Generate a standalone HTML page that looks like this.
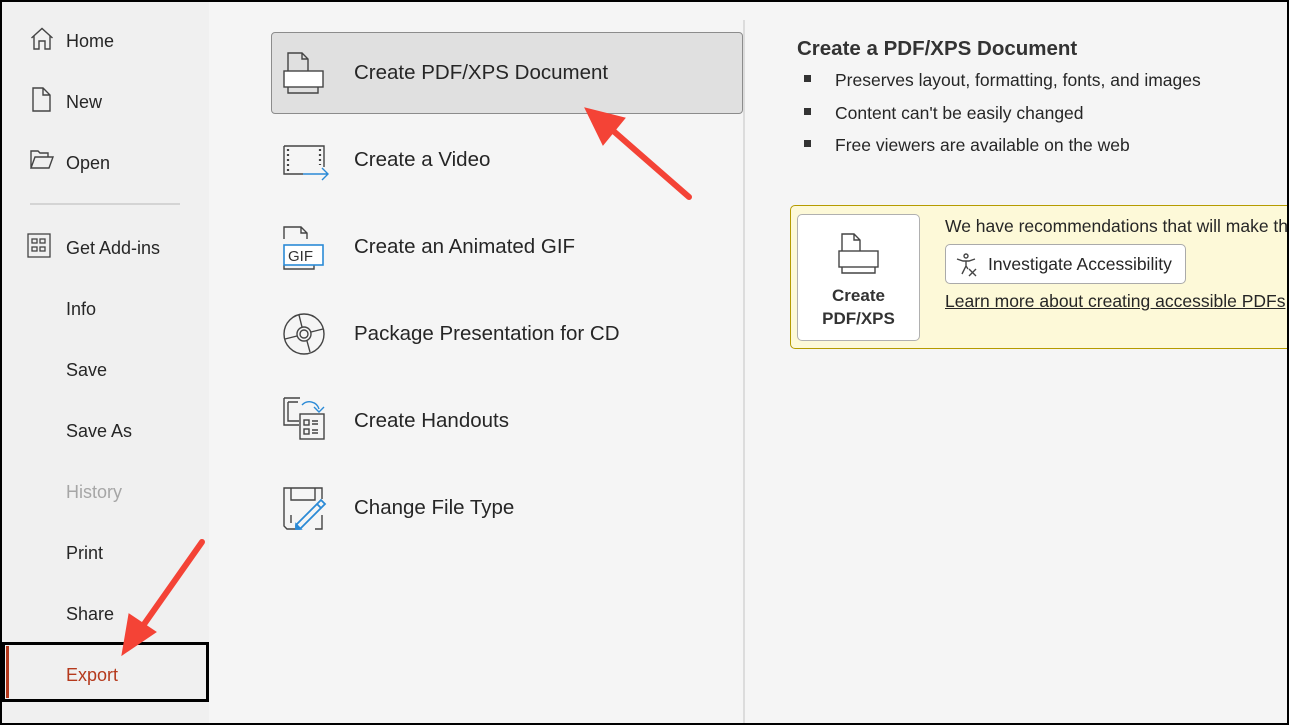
<!DOCTYPE html>
<html><head><meta charset="utf-8"><style>
*{margin:0;padding:0;box-sizing:border-box}
body{width:1289px;height:725px;overflow:hidden;background:#000;font-family:"Liberation Sans","DejaVu Sans",sans-serif;color:#262626;position:relative}
#frame{position:absolute;left:0;top:0;width:1287px;height:723px;overflow:hidden}
#side{position:absolute;left:2px;top:2px;width:207px;height:721px;background:#f0f0f0}
#main{position:absolute;left:209px;top:2px;width:1078px;height:721px;background:#f5f5f5}
.t{position:absolute;white-space:nowrap;line-height:1}
.si{font-size:18px;left:66px}
.mi{font-size:20.5px;left:354px}
svg{position:absolute;overflow:visible}
</style></head><body>
<div id="frame">
<div id="side"></div>
<div id="main"></div>
<!-- sidebar -->
<svg style="left:30px;top:27px" width="26" height="26" viewBox="0 0 26 26" fill="none" stroke="#444" stroke-width="1.4"><path d="M1.5 11 L12 1.5 L22.5 11 M4 9 V22 H9 V14 H15 V22 H20 V9"/></svg>
<div class="t si" style="top:32px">Home</div>
<svg style="left:32px;top:87px" width="20" height="26" viewBox="0 0 20 26" fill="none" stroke="#444" stroke-width="1.4"><path d="M1 1 H11 L18 8 V24 H1 Z M11 1 V8 H18"/></svg>
<div class="t si" style="top:93px">New</div>
<svg style="left:30px;top:150px" width="24" height="20" viewBox="0 0 24 20" fill="none" stroke="#444" stroke-width="1.4"><path d="M1 18 V1 H8 L10 3 H18 V7 M1 18 L5 7 H23 L19 18 Z"/></svg>
<div class="t si" style="top:154px">Open</div>
<div style="position:absolute;left:30px;top:203px;width:150px;height:2px;background:#d4d4d4"></div>
<svg style="left:27px;top:233px" width="24" height="24" viewBox="0 0 24 24" fill="none" stroke="#444" stroke-width="1.3"><rect x="1" y="1" width="22" height="23"/><rect x="5" y="6" width="5" height="4"/><rect x="13" y="6" width="5" height="4"/><rect x="5" y="14" width="5" height="4"/><rect x="13" y="14" width="5" height="4"/></svg>
<div class="t si" style="top:239px">Get Add-ins</div>
<div class="t si" style="top:300px">Info</div>
<div class="t si" style="top:361px">Save</div>
<div class="t si" style="top:422px">Save As</div>
<div class="t si" style="top:483px;color:#a6a6a6">History</div>
<div class="t si" style="top:544px">Print</div>
<div class="t si" style="top:605px">Share</div>
<div style="position:absolute;left:2px;top:642px;width:207px;height:60px;border:3px solid #000"></div>
<div style="position:absolute;left:6px;top:646px;width:3px;height:52px;background:#b5391c"></div>
<div class="t si" style="top:666px;color:#b5391c">Export</div>
<!-- middle -->
<div style="position:absolute;left:743px;top:20px;width:2px;height:705px;background:#dcdcdc"></div>
<div style="position:absolute;left:271px;top:32px;width:472px;height:82px;background:#e0e0e0;border:1px solid #8c8c8c;border-radius:4px"></div>
<svg style="left:283px;top:52px" width="42" height="42" viewBox="0 0 42 42" fill="none" stroke="#444" stroke-width="1.4"><path d="M5 19 V1 H19 L25 7 V19 M19 1 V7 H25"/><rect x="1" y="19" width="39" height="16" fill="#fff"/><path d="M5 35 V41 H35 V35"/></svg>
<div class="t mi" style="top:63px">Create PDF/XPS Document</div>
<svg style="left:283px;top:145px" width="46" height="40" viewBox="0 0 46 40" fill="none" stroke="#444" stroke-width="1.4"><path d="M1 1 H41 V22 M20 29 H1 V1"/><path d="M5 4 V27 M37 4 V20" stroke-dasharray="2 3" stroke-width="2.2"/><path d="M20 29 H45 M39 23 L45 29 L39 35" stroke="#2b8ad6"/></svg>
<div class="t mi" style="top:150px">Create a Video</div>
<svg style="left:283px;top:226px" width="42" height="44" viewBox="0 0 42 44" fill="none" stroke="#444" stroke-width="1.4"><path d="M1 13 V1 H18 L24 7 V13 M18 1 V7 H24 M1 39 V43 H31 V39"/><rect x="1" y="19" width="39" height="20" fill="#fff" stroke="#2b8ad6" stroke-width="1.6"/><text x="5" y="35" font-size="15" font-family="Liberation Sans" fill="#333" stroke="none">GIF</text></svg>
<div class="t mi" style="top:237px">Create an Animated GIF</div>
<svg style="left:283px;top:313px" width="42" height="42" viewBox="0 0 42 42" fill="none" stroke="#444" stroke-width="1.4"><circle cx="21" cy="21" r="20"/><circle cx="21" cy="21" r="7"/><circle cx="21" cy="21" r="4"/><path d="M16 2 L19 14 M2 26 L14 23 M27 39 L24 28 M40 16 L28 19"/></svg>
<div class="t mi" style="top:324px">Package Presentation for CD</div>
<svg style="left:283px;top:397px" width="46" height="46" viewBox="0 0 46 46" fill="none" stroke="#444" stroke-width="1.4"><path d="M1 1 H17 M1 1 V28 H16 M5 5 H15 M5 5 V24 H16"/><rect x="17" y="17" width="24" height="25" fill="#f5f5f5"/><rect x="21" y="23" width="5" height="5"/><rect x="21" y="32" width="5" height="5"/><path d="M29 24 H35 M29 27 H35 M29 33 H35 M29 36 H35"/><path d="M19 8 A10 10 0 0 1 36 12 M31 10 L36 15 L41 10" stroke="#2b8ad6"/></svg>
<div class="t mi" style="top:411px">Create Handouts</div>
<svg style="left:283px;top:487px" width="46" height="44" viewBox="0 0 46 44" fill="none" stroke="#444" stroke-width="1.4"><path d="M13 42 H4 L1 39 V1 H39 V12 M8 1 V13 H32 V1 M8 28 V36 M39 28 V42 H32"/><path d="M42 17 L17 42 L13 42 L13 38 L38 13 Z M34 17 L38 21" stroke="#2b8ad6" stroke-width="1.8"/><path d="M13 42 L13 37 L18 42 Z" fill="#2b8ad6" stroke="#2b8ad6"/></svg>
<div class="t mi" style="top:498px">Change File Type</div>
<!-- right -->
<div class="t" style="left:797px;top:39px;font-size:20.5px;font-weight:bold;color:#333">Create a PDF/XPS Document</div>
<div style="position:absolute;left:804px;top:75px;width:7px;height:7px;background:#333"></div>
<div style="position:absolute;left:804px;top:108px;width:7px;height:7px;background:#333"></div>
<div style="position:absolute;left:804px;top:140px;width:7px;height:7px;background:#333"></div>
<div class="t" style="left:835px;top:72px;font-size:17.5px">Preserves layout, formatting, fonts, and images</div>
<div class="t" style="left:835px;top:105px;font-size:17.5px">Content can't be easily changed</div>
<div class="t" style="left:835px;top:137px;font-size:17.5px">Free viewers are available on the web</div>
<div style="position:absolute;left:790px;top:205px;width:520px;height:144px;background:#fdf9d8;border:1px solid #b59b00;border-radius:5px"></div>
<div style="position:absolute;left:797px;top:214px;width:123px;height:127px;background:#fff;border:1px solid #b0b0b0;border-radius:5px"></div>
<svg style="left:838px;top:233px" width="42" height="42" viewBox="0 0 42 42" fill="none" stroke="#444" stroke-width="1.4"><path d="M4 18 V1 H16 L22 7 V18 M16 1 V7 H22"/><rect x="1" y="18" width="39" height="16"/><path d="M4 34 V40 H37 V34"/></svg>
<div class="t" style="left:797px;top:284px;width:123px;text-align:center;font-size:17px;font-weight:bold;line-height:23px;color:#333">Create<br>PDF/XPS</div>
<div class="t" style="left:945px;top:218px;font-size:17.5px">We have recommendations that will make this file more accessible</div>
<div style="position:absolute;left:945px;top:244px;width:241px;height:40px;background:#fff;border:1px solid #aaa;border-radius:5px"></div>
<svg style="left:955px;top:253px" width="24" height="24" viewBox="0 0 24 24" fill="none" stroke="#444" stroke-width="1.4"><circle cx="11" cy="3" r="2"/><path d="M2 6 L8 8 H14 L20 6 M11 8 V13 L7 21 M11 13 L13 16 M14 16 L21 23 M21 16 L14 23"/></svg>
<div class="t" style="left:988px;top:256px;font-size:17.5px">Investigate Accessibility</div>
<div class="t" style="left:945px;top:293px;font-size:17.5px;text-decoration:underline">Learn more about creating accessible PDFs</div>
<!-- arrows -->
<svg style="left:0;top:0" width="1289" height="725"><g stroke="#f44336" stroke-width="6" stroke-linecap="round" fill="#f44336"><line x1="689" y1="197" x2="610" y2="128"/><polygon points="585,108 625,118 603,145" stroke-width="1"/><line x1="202" y1="542" x2="140" y2="630"/><polygon points="122,655 129,614 156,632" stroke-width="1"/></g></svg>
</div>
</body></html>
